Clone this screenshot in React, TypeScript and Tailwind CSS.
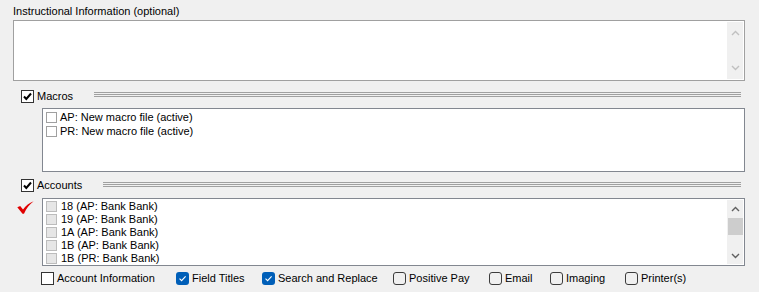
import React from 'react';

const ClassicBox = ({ checked }: { checked?: boolean }) => (
  <span className="w-[13px] h-[13px] border border-[#333333] bg-white flex items-center justify-center shrink-0">
    {checked && (
      <svg width="11" height="11" viewBox="0 0 11 11">
        <path d="M2 5.5 L4.3 8 L9 2.5" fill="none" stroke="#000" strokeWidth="2" />
      </svg>
    )}
  </span>
);

const ModernBox = ({ checked }: { checked?: boolean }) =>
  checked ? (
    <span className="w-[13px] h-[13px] rounded-[3px] bg-[#005fb8] flex items-center justify-center shrink-0">
      <svg width="9" height="9" viewBox="0 0 9 9">
        <path d="M1.5 4.7 L3.6 6.7 L7.6 2.3" fill="none" stroke="#fff" strokeWidth="1.1" />
      </svg>
    </span>
  ) : (
    <span className="w-[13px] h-[13px] rounded-[3px] border border-[#3c3c3c] shrink-0" />
  );

const TripleLine = () => (
  <div className="flex-1 flex flex-col gap-px">
    <div className="h-px bg-[#a0a0a0]" />
    <div className="h-px bg-[#a0a0a0]" />
    <div className="h-px bg-[#a0a0a0]" />
  </div>
);

const Chevron = ({ up, color }: { up?: boolean; color: string }) => (
  <svg width="9" height="6" viewBox="0 0 9 6">
    <path d={up ? 'M1 5 L4.5 1.5 L8 5' : 'M1 1 L4.5 4.5 L8 1'} fill="none" stroke={color} strokeWidth="1.4" />
  </svg>
);

const macros = ['AP: New macro file (active)', 'PR: New macro file (active)'];
const accounts = ['18 (AP: Bank Bank)', '19 (AP: Bank Bank)', '1A (AP: Bank Bank)', '1B (AP: Bank Bank)', '1B (PR: Bank Bank)'];

const options = [
  { label: 'Field Titles', checked: true, w: 'w-[86px]' },
  { label: 'Search and Replace', checked: true, w: 'w-[131px]' },
  { label: 'Positive Pay', checked: false, w: 'w-[96px]' },
  { label: 'Email', checked: false, w: 'w-[61px]' },
  { label: 'Imaging', checked: false, w: 'w-[75px]' },
  { label: 'Printer(s)', checked: false, w: 'w-[80px]' },
];

export default function App() {
  return (
    <div className="w-[759px] h-[292px] bg-[#f0f0f0] text-black text-[11px] leading-[13px] font-['Liberation_Sans',Arial,sans-serif] overflow-hidden">
      <div className="pl-[13px] pt-[5px] h-[20px]">Instructional Information (optional)</div>

      <div className="ml-[13px] w-[732px] h-[61px] border border-[#a0a0a0] bg-white flex justify-end p-px">
        <div className="w-[16px] bg-[#f0f0f0] flex flex-col items-center justify-between py-[8px]">
          <Chevron up color="#c0c0c0" />
          <Chevron color="#c0c0c0" />
        </div>
      </div>

      <div className="flex items-start pl-[21px] mt-[9px] h-[13px]">
        <ClassicBox checked />
        <span className="ml-[3px] mr-[21px] leading-[13px]">Macros</span>
        <div className="flex-1 mr-[18px] pt-[2px] flex">
          <TripleLine />
        </div>
      </div>

      <div className="ml-[42px] mt-[5px] w-[703px] h-[64px] border border-[#828790] bg-white pl-[3px] pt-px">
        {macros.map((m) => (
          <div key={m} className="flex items-center h-[14px]">
            <span className="w-[11px] h-[11px] border border-[#a0a0a0] bg-white" />
            <span className="ml-[3px]">{m}</span>
          </div>
        ))}
      </div>

      <div className="flex items-start pl-[21px] mt-[7px] h-[13px]">
        <ClassicBox checked />
        <span className="ml-[3px] mr-[21px] leading-[13px]">Accounts</span>
        <div className="flex-1 mr-[18px] pt-[3px] flex">
          <TripleLine />
        </div>
      </div>

      <div className="flex mt-[6px]">
        <div className="w-[42px] pl-[17px] pt-[3px]">
          <svg width="17" height="13" viewBox="0 0 17 13">
            <path d="M0.3 6.3 L3.2 5 L6 8.5 C9 4.5 12 2 16.7 0.3 C12.5 3.5 9.5 7 7 12.7 L5.5 12.7 Z" fill="#e00000" />
          </svg>
        </div>
        <div className="w-[703px] h-[68px] border border-[#828790] bg-white flex">
          <div className="flex-1 pl-[3px] pt-[1px]">
            {accounts.map((a, i) => (
              <div key={i} className="flex items-center h-[13px]">
                <span className="w-[11px] h-[11px] border border-[#bcbcbc] bg-[#e6e6e6]" />
                <span className="ml-[4px]">{a}</span>
              </div>
            ))}
          </div>
          <div className="w-[16px] my-px mr-px bg-[#f0f0f0] flex flex-col items-center">
            <div className="h-[18px] flex items-center justify-center">
              <Chevron up color="#606060" />
            </div>
            <div className="w-[15px] h-[17px] bg-[#cdcdcd]" />
            <div className="flex-1" />
            <div className="h-[17px] flex items-center justify-center">
              <Chevron color="#606060" />
            </div>
          </div>
        </div>
      </div>

      <div className="flex items-center pl-[41px] mt-[5px] text-[11px] leading-[14px]">
        <div className="w-[135px] flex items-center">
          <ClassicBox />
          <span className="ml-[3px]">Account Information</span>
        </div>
        {options.map((o) => (
          <div key={o.label} className={`${o.w} flex items-center`}>
            <ModernBox checked={o.checked} />
            <span className="ml-[3px]">{o.label}</span>
          </div>
        ))}
      </div>
    </div>
  );
}
